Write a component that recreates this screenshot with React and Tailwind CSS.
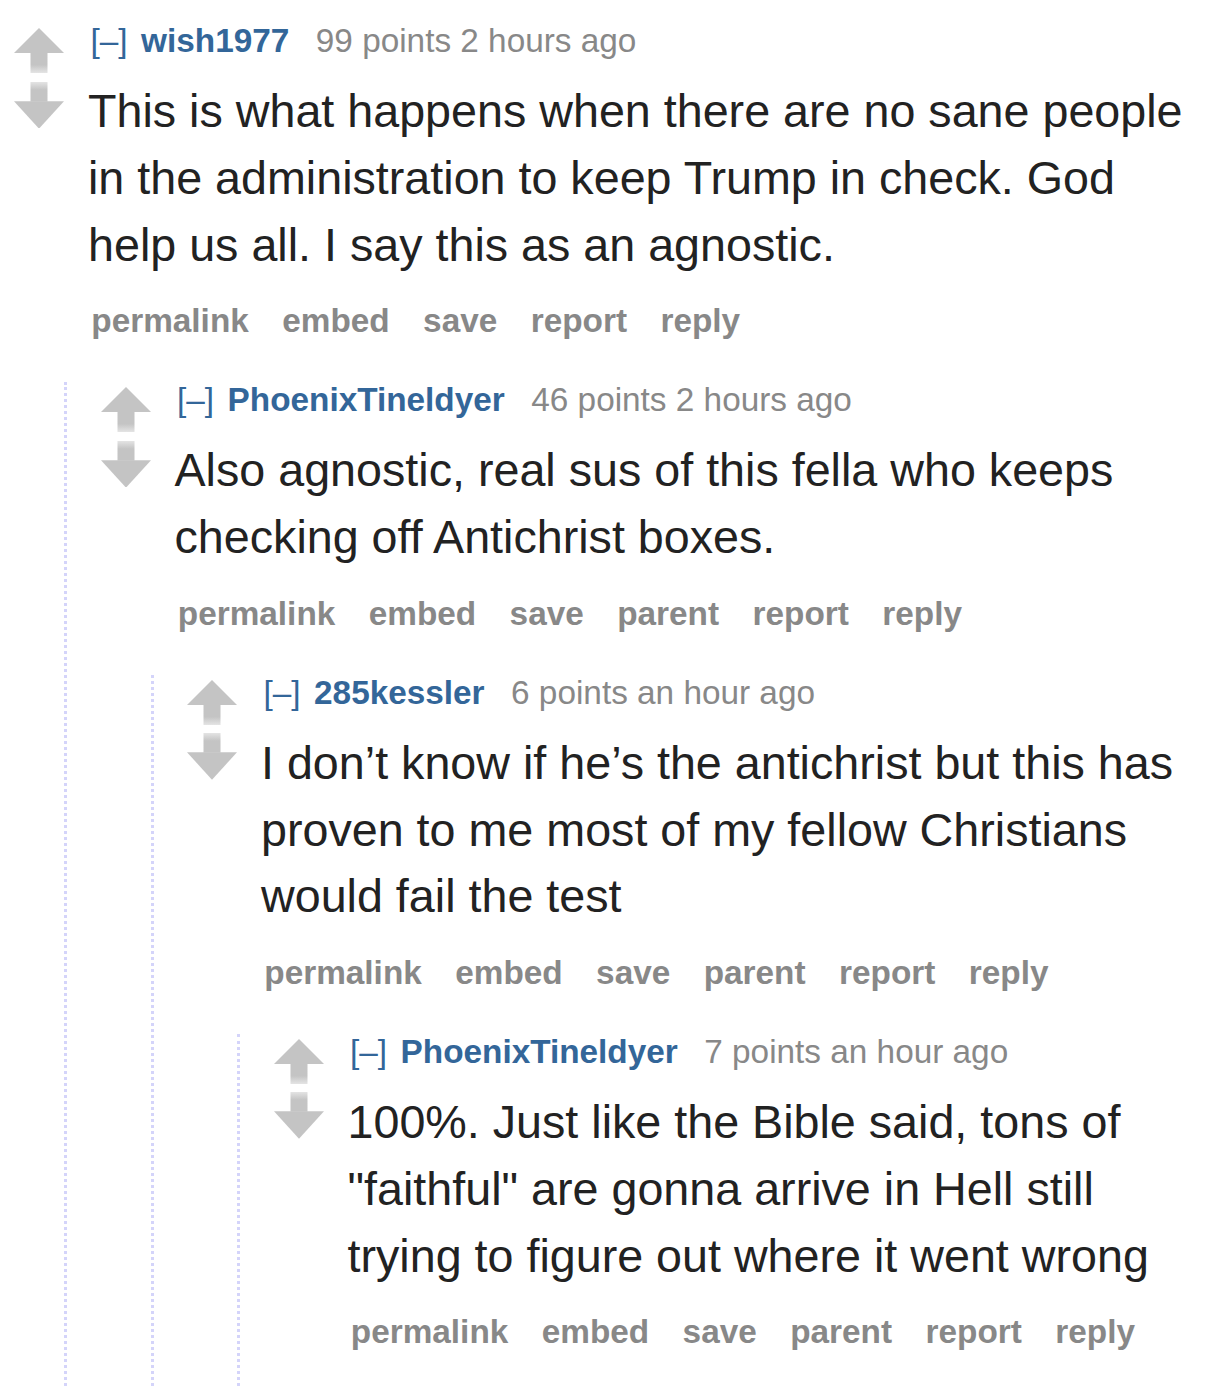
import React from "react";

const GRAY = "#c4c4c4";

function UpArrow() {
  return (
    <svg width="50" height="46.67" viewBox="0 0 15 14" className="block">
      <defs>
        <linearGradient id="upStem" x1="0" y1="0" x2="0" y2="1">
          <stop offset="0" stopColor={GRAY} />
          <stop offset="0.6" stopColor={GRAY} />
          <stop offset="1" stopColor="#e4e4e4" />
        </linearGradient>
      </defs>
      <polygon points="7.5,0 15,7.5 0,7.5" fill={GRAY} />
      <rect x="4.95" y="7.4" width="5.1" height="6.1" fill="url(#upStem)" />
    </svg>
  );
}

function DownArrow() {
  return (
    <svg width="50" height="46.67" viewBox="0 0 15 14" className="block">
      <defs>
        <linearGradient id="downStem" x1="0" y1="0" x2="0" y2="1">
          <stop offset="0" stopColor="#e4e4e4" />
          <stop offset="0.4" stopColor={GRAY} />
          <stop offset="1" stopColor={GRAY} />
        </linearGradient>
      </defs>
      <rect x="4.95" y="0" width="5.1" height="5.9" fill="url(#downStem)" />
      <polygon points="0,5.8 15,5.8 7.5,14" fill={GRAY} />
    </svg>
  );
}

function Comment({ author, points, time, body, buttons, children }) {
  return (
    <div className={children ? "" : "pb-[60px]"}>
      <div className="flex">
        <div className="ml-[14px] mt-[5.4px] w-[50px] shrink-0 flex flex-col">
          <UpArrow />
          <div className="h-[6.67px]" />
          <DownArrow />
        </div>
        <div className="ml-[24px] flex-1 min-w-0">
          <div className="flex items-baseline text-[33.33px] leading-[36px] ml-[2.5px] whitespace-nowrap">
            <span className="text-[#369]">[–]</span>
            <span className="ml-[13.5px] font-bold text-[#369]">{author}</span>
            <span className="ml-[26.5px] text-[#888]">
              {points} {time}
            </span>
          </div>
          <p className="mt-[19.4px] text-[46.67px] leading-[66.67px] text-[#222]">{body}</p>
          <ul className="mt-[24.7px] flex gap-[26.8px] text-[33.33px] leading-[36px] font-bold text-[#888]">
            {buttons.map((b) => (
              <li key={b} className="px-[3.33px]">
                {b}
              </li>
            ))}
          </ul>
        </div>
      </div>
      {children && (
        <div className="ml-[64px] mt-[43.1px] border-l-[3px] border-dotted border-[#d4d4fa] pl-[19.5px]">
          {children}
        </div>
      )}
    </div>
  );
}

export default function App() {
  const top = ["permalink", "embed", "save", "report", "reply"];
  const nested = ["permalink", "embed", "save", "parent", "report", "reply"];
  return (
    <div className="w-[1220px] h-[1386px] overflow-hidden bg-white pt-[22.9px] pr-[12px] font-['Liberation_Sans',Arial,sans-serif]">
      <Comment
        author="wish1977"
        points="99 points"
        time="2 hours ago"
        body="This is what happens when there are no sane people in the administration to keep Trump in check. God help us all. I say this as an agnostic."
        buttons={top}
      >
        <Comment
          author="PhoenixTineldyer"
          points="46 points"
          time="2 hours ago"
          body="Also agnostic, real sus of this fella who keeps checking off Antichrist boxes."
          buttons={nested}
        >
          <Comment
            author="285kessler"
            points="6 points"
            time="an hour ago"
            body="I don’t know if he’s the antichrist but this has proven to me most of my fellow Christians would fail the test"
            buttons={nested}
          >
            <Comment
              author="PhoenixTineldyer"
              points="7 points"
              time="an hour ago"
              body={'100%. Just like the Bible said, tons of "faithful" are gonna arrive in Hell still trying to figure out where it went wrong'}
              buttons={nested}
            />
          </Comment>
        </Comment>
      </Comment>
    </div>
  );
}
